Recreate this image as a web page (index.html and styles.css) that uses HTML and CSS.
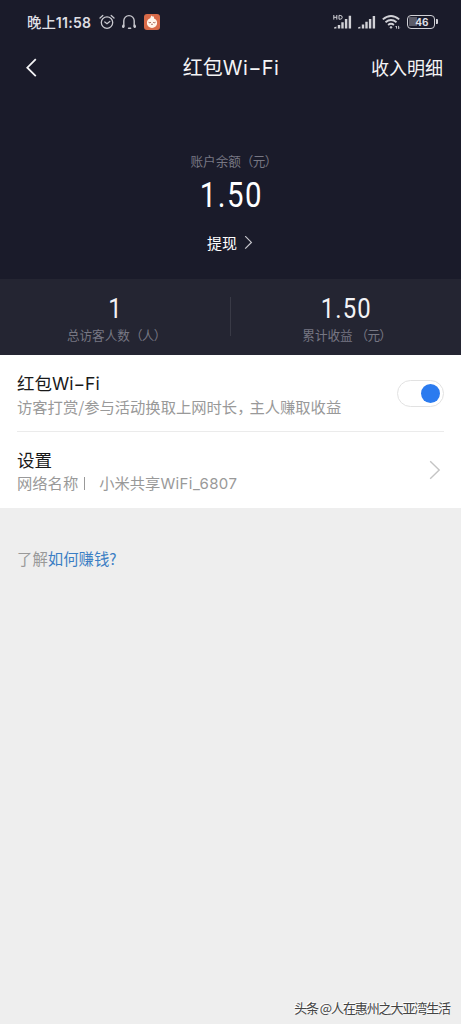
FILE: index.html
```html
<!DOCTYPE html>
<html lang="zh-CN">
<head>
<meta charset="utf-8">
<title>红包Wi-Fi</title>
<link rel="stylesheet" href="styles.css">
</head>
<body>
<div class="screen">
  <header class="status">
    <span class="clock">晚上<b>11:58</b></span>
    <svg class="alarm" width="16" height="16" viewBox="0 0 16 16" fill="none" stroke="#c9c9cf" stroke-width="1.3" stroke-linecap="round"><circle cx="8" cy="8.6" r="5.7"/><path d="M1 4 3.8 1.5M12.2 1.5 15 4M5.8 8l2.2 1.7L10.8 7.5"/></svg>
    <svg class="headset" width="16" height="16" viewBox="0 0 16 16" fill="none" stroke="#c9c9cf" stroke-width="1.4" stroke-linecap="round"><path d="M2.8 12V6.8a5.2 5.2 0 0 1 10.4 0V12M2.8 12.6H1.6M13.2 12.6h1.2"/><path d="M2.3 11.6v1.4M13.7 11.6v1.4" stroke-width="2.2"/><path d="M7.6 14.2h2" stroke-width="1.6"/></svg>
    <svg class="app" width="16" height="16" viewBox="0 0 16 16"><rect width="16" height="16" rx="3" fill="#d86a48"/><path d="M6.2 4.2 7.4 1.6l1.2 1 1.2-.2.3 2a4.9 4.9 0 0 1 3 4.6 5.1 5 0 0 1-10.2 0 5 5 0 0 1 3.3-4.8Z" fill="#fff6ec"/><path d="M4.6 8.3q1.2.9 2.3.1M9.2 8.4q1.1.8 2.3-.1M7.2 10.2q.8.5 1.6 0" fill="none" stroke="#9c5140" stroke-width=".9"/></svg>
    <span class="space"></span>
    <svg class="signal-hd" width="19" height="16" viewBox="0 0 19 16"><path d="M1 14.6h2.4v-2.2L1 13.4Zm3.8 0h2.4v-3.6H4.8Zm3.5 0h2.4V8.2H8.3Zm3.6 0h2.4V5h-2.4Zm3.8 0h2.4V1.7h-2.4Z" fill="#d1d1d6"/><path d="M.8 1v4.6M.8 3.3h3M3.8 1v4.6M6 1.4v3.8h1.2q2 0 2-1.9t-2-1.9Z" fill="none" stroke="#d1d1d6" stroke-width="1"/></svg>
    <svg class="signal" width="19" height="16" viewBox="0 0 19 16"><path d="M1 14.6h2.4v-2.2L1 13.4Zm3.8 0h2.4v-4.2H4.8Zm3.5 0h2.4V7.8H8.3Zm3.6 0h2.4V5h-2.4Zm3.8 0h2.4V2h-2.4Z" fill="#d1d1d6"/></svg>
    <svg class="wifi" width="19" height="16" viewBox="0 0 19 16" fill="none" stroke="#d1d1d6" stroke-width="1.9"><path d="M.8 5.4q8.2-7 16.4 0M3.5 8.2q5.5-4.4 11 0M6.1 11q2.9-2.3 5.8 0"/><circle cx="9" cy="13.4" r=".8" fill="#d1d1d6" stroke-width="1"/><path d="M14.5 14.6V12l-1 1M16.6 11.9v2.8l1-1" stroke-width=".9"/></svg>
    <div class="battery">46</div>
  </header>
  <nav class="bar">
    <svg class="back" width="12" height="20" viewBox="0 0 12 20" fill="none" stroke="#f4f4f6" stroke-width="1.8"><path d="m10.8 1.2-8.5 8.5 8.5 8.5"/></svg>
    <h1 class="title">红包<span class="latin">Wi−Fi</span></h1>
    <a class="detail">收入明细</a>
  </nav>
  <section class="balance">
    <div class="caption">账户余额<span class="paren">（元）</span></div>
    <div class="amount">1.50</div>
    <div class="withdraw">提现<svg width="9" height="14" viewBox="0 0 9 14" fill="none" stroke="#c8c8ce" stroke-width="1.2"><path d="m1.2 .2 6.2 6.2-6.2 6.2"/></svg></div>
  </section>
  <section class="stats">
    <div class="stat"><div class="number">1</div><div class="caption">总访客人数<span class="paren">（人）</span></div></div>
    <div class="stat"><div class="number">1.50</div><div class="caption">累计收益 <span class="paren">（元）</span></div></div>
  </section>
  <main class="list">
    <div class="row">
      <div class="copy"><h2 class="name">红包<span class="latin">Wi−Fi</span></h2><p class="desc">访客打赏/参与活动换取上网时长<span class="comma">，</span>主人赚取收益</p></div>
      <div class="toggle"><i class="knob"></i></div>
    </div>
    <div class="row second">
      <div class="copy"><h2 class="name">设置</h2><p class="desc network">网络名称<span class="divider"></span>小米共享<span class="latin">WiFi_6807</span></p></div>
      <svg class="more" width="12" height="20" viewBox="0 0 12 20" fill="none" stroke="#c4c4c4" stroke-width="1.4"><path d="m1.2 1.2 9 8.8-9 8.8"/></svg>
    </div>
  </main>
  <p class="help">了解<a class="link">如何赚钱?</a></p>
  <footer class="mark">头条 @人在惠州之大亚湾生活</footer>
</div>
</body>
</html>
```
FILE: styles.css
```css
* { box-sizing: border-box; }
body, h1, h2, p { margin: 0; font-weight: 400; }
body { font-family: "Noto Sans CJK SC", sans-serif; background: #eee; }
svg { display: block; flex: none; }
.screen { width: 461px; height: 1024px; display: flex; flex-direction: column; background: #eee; overflow: hidden; white-space: nowrap; }
.latin { font-family: Inter, "Noto Sans CJK SC", sans-serif; }
.status { height: 44px; flex: none; display: flex; align-items: center; padding: 0 24px 0 27px; background: #1a1b2a; color: #dedee3; }
.clock { width: 65px; font-size: 14.4px; font-weight: 500; line-height: 20px; }
.clock b { font-family: Inter, sans-serif; font-weight: 600; font-size: 14px; letter-spacing: .3px; }
.alarm { margin-left: 7px; }
.headset { margin-left: 6px; }
.app { margin-left: 7px; }
.space { flex: 1; }
.signal { margin-left: 5px; }
.wifi { margin-left: 6px; }
.battery { position: relative; width: 28px; height: 14px; margin: 0 2px 0 6px; border: 1.5px solid #d1d1d6; border-radius: 4px; background: linear-gradient(90deg, #5b5b67 0 8px, transparent 8px) 1px 1px / 22px 9px no-repeat; font: 700 10px/12px Inter, sans-serif; text-align: center; padding-left: 2px; }
.battery::after { content: ""; position: absolute; right: -4px; top: 3px; width: 2px; height: 5px; background: #d1d1d6; border-radius: 0 1px 1px 0; }
.bar { height: 50px; flex: none; display: grid; grid-template-columns: 1fr auto 1fr; align-items: center; padding: 0 18px 2px 25px; background: #1a1b2a; color: #f4f4f6; }
.title { font-size: 20px; line-height: 30px; margin-left: -6px; padding-bottom: 1px; }
.title .latin { letter-spacing: .4px; }
.detail { font-size: 18px; line-height: 28px; padding-bottom: 2px; justify-self: end; }
.balance { height: 185px; flex: none; background: #1a1b2a; color: #fff; display: flex; flex-direction: column; align-items: center; padding-top: 57px; }
.caption { font-size: 12.6px; line-height: 20px; color: #777783; padding-left: 2px; }
.paren { letter-spacing: -.7px; }
.balance .caption { padding-left: 6px; }
.amount { font: 400 35px/40px Roboto, sans-serif; letter-spacing: 1.7px; margin-top: 5px; padding-left: 2px; transform: scaleX(.84); }
.withdraw { display: flex; align-items: center; gap: 7px; margin-top: 15px; padding-right: 1px; font-size: 15px; line-height: 24px; }
.stats { height: 76px; flex: none; display: grid; grid-template-columns: 1fr 1fr; background: #242532; color: #f3f3f6; }
.stat { position: relative; display: flex; flex-direction: column; align-items: center; padding-top: 14px; }
.stat + .stat::before { content: ""; position: absolute; left: -1px; top: 18px; height: 39px; width: 1px; background: #393a46; }
.number { font: 400 28.5px/32px Roboto, sans-serif; letter-spacing: 1.3px; padding-left: 1px; transform: scaleX(.84); }
.list { height: 153px; flex: none; padding: 0 17px; background: #fff; }
.row { height: 77px; display: flex; justify-content: space-between; align-items: center; border-bottom: 1px solid #ebebeb; }
.row.second { height: 76px; border: 0; }
.name { font-size: 17.5px; line-height: 26px; padding-top: 2px; margin-bottom: -2px; color: #191919; }
.desc { font-size: 15.3px; line-height: 23px; color: #999; }
.comma { font-feature-settings: "halt"; padding-right: 4.6px; }
.network .latin { font-size: 15px; letter-spacing: .4px; }
.divider { display: inline-block; width: 1px; height: 13px; background: #999; margin: 0 14px 0 6px; vertical-align: -1px; }
.toggle { width: 47px; height: 27px; border: 1px solid #e2e2e2; border-radius: 14px; display: flex; align-items: center; justify-content: flex-end; padding-right: 3px; }
.knob { width: 19px; height: 19px; border-radius: 50%; background: #2b7bef; }
.more { margin-right: 3px; }
.help { padding: 38px 17px 0; font-size: 15.4px; line-height: 24px; color: #999; }
.link { color: #3b7ec4; }
.mark { margin-top: auto; align-self: flex-end; padding: 0 11px 6px 0; font-size: 13px; line-height: 20px; letter-spacing: -1.1px; color: #444; text-shadow: -1px -1px 0 #fff; }
```
